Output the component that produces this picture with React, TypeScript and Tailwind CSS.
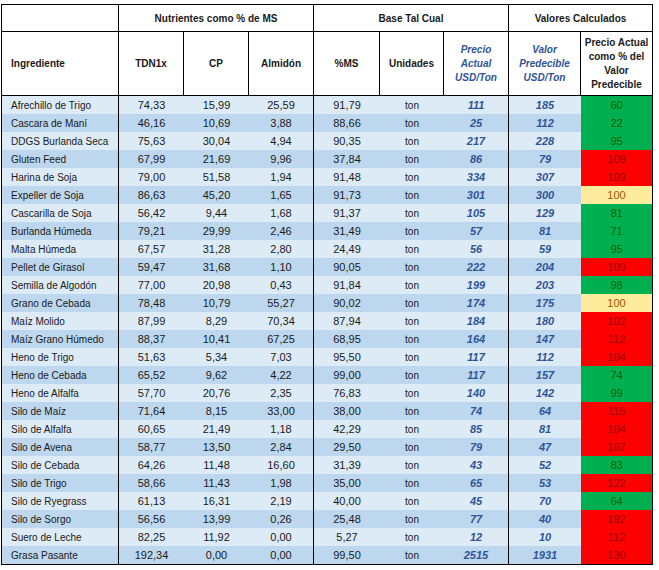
type Tone = 'G' | 'R' | 'Y'

type Row = [string, string, string, string, string, string, string, string, Tone]

const rows: Row[] = [
  ['Afrechillo de Trigo', '74,33', '15,99', '25,59', '91,79', '111', '185', '60', 'G'],
  ['Cascara de Maní', '46,16', '10,69', '3,88', '88,66', '25', '112', '22', 'G'],
  ['DDGS Burlanda Seca', '75,63', '30,04', '4,94', '90,35', '217', '228', '95', 'G'],
  ['Gluten Feed', '67,99', '21,69', '9,96', '37,84', '86', '79', '109', 'R'],
  ['Harina de Soja', '79,00', '51,58', '1,94', '91,48', '334', '307', '109', 'R'],
  ['Expeller de Soja', '86,63', '45,20', '1,65', '91,73', '301', '300', '100', 'Y'],
  ['Cascarilla de Soja', '56,42', '9,44', '1,68', '91,37', '105', '129', '81', 'G'],
  ['Burlanda Húmeda', '79,21', '29,99', '2,46', '31,49', '57', '81', '71', 'G'],
  ['Malta Húmeda', '67,57', '31,28', '2,80', '24,49', '56', '59', '95', 'G'],
  ['Pellet de Girasol', '59,47', '31,68', '1,10', '90,05', '222', '204', '109', 'R'],
  ['Semilla de Algodón', '77,00', '20,98', '0,43', '91,84', '199', '203', '98', 'G'],
  ['Grano de Cebada', '78,48', '10,79', '55,27', '90,02', '174', '175', '100', 'Y'],
  ['Maíz Molido', '87,99', '8,29', '70,34', '87,94', '184', '180', '102', 'R'],
  ['Maíz Grano Húmedo', '88,37', '10,41', '67,25', '68,95', '164', '147', '112', 'R'],
  ['Heno de Trigo', '51,63', '5,34', '7,03', '95,50', '117', '112', '104', 'R'],
  ['Heno de Cebada', '65,52', '9,62', '4,22', '99,00', '117', '157', '74', 'G'],
  ['Heno de Alfalfa', '57,70', '20,76', '2,35', '76,83', '140', '142', '99', 'G'],
  ['Silo de Maíz', '71,64', '8,15', '33,00', '38,00', '74', '64', '115', 'R'],
  ['Silo de Alfalfa', '60,65', '21,49', '1,18', '42,29', '85', '81', '104', 'R'],
  ['Silo de Avena', '58,77', '13,50', '2,84', '29,50', '79', '47', '167', 'R'],
  ['Silo de Cebada', '64,26', '11,48', '16,60', '31,39', '43', '52', '83', 'G'],
  ['Silo de Trigo', '58,66', '11,43', '1,98', '35,00', '65', '53', '122', 'R'],
  ['Silo de Ryegrass', '61,13', '16,31', '2,19', '40,00', '45', '70', '64', 'G'],
  ['Silo de Sorgo', '56,56', '13,99', '0,26', '25,48', '77', '40', '192', 'R'],
  ['Suero de Leche', '82,25', '11,92', '0,00', '5,27', '12', '10', '112', 'R'],
  ['Grasa Pasante', '192,34', '0,00', '0,00', '99,50', '2515', '1931', '130', 'R'],
]

const toneClass: Record<Tone, string> = {
  G: 'bg-[#00b050] text-[#006100]',
  R: 'bg-[#ff0000] text-[#9c0006]',
  Y: 'bg-[#ffeb9c] text-[#9c5700]',
}

const head = 'flex items-center justify-center text-center font-bold border-r border-black'

export default function App() {
  return (
    <div className="bg-white w-[659px] h-[570px] pt-1 pl-px font-['Liberation_Sans',Arial,sans-serif] text-[10px] text-[#1a1a1a]">
      <div className="w-[652px] border border-black grid grid-cols-[117px_65px_65px_65px_66px_64px_65px_72px_71px]">
        {/* header row 1 */}
        <div className="h-[27px] border-r border-b border-black" />
        <div className={`${head} col-span-3 h-[27px] border-b`}>Nutrientes como % de MS</div>
        <div className={`${head} col-span-3 h-[27px] border-b`}>Base Tal Cual</div>
        <div className={`${head} col-span-2 h-[27px] border-b border-r-0`}>Valores Calculados</div>

        {/* header row 2 */}
        <div className="h-[64px] flex items-center pl-[9px] font-bold border-r border-b border-black">Ingrediente</div>
        <div className={`${head} h-[64px] border-b`}>TDN1x</div>
        <div className={`${head} h-[64px] border-b`}>CP</div>
        <div className={`${head} h-[64px] border-b`}>Almidón</div>
        <div className={`${head} h-[64px] border-b`}>%MS</div>
        <div className={`${head} h-[64px] border-b`}>Unidades</div>
        <div className={`${head} h-[64px] border-b italic text-[#2f5597] leading-[14px]`}>
          Precio
          <br />
          Actual
          <br />
          USD/Ton
        </div>
        <div className={`${head} h-[64px] border-b italic text-[#2f5597] leading-[14px]`}>
          Valor
          <br />
          Predecible
          <br />
          USD/Ton
        </div>
        <div className={`${head} h-[64px] border-b border-r-0 leading-[14px]`}>
          Precio Actual
          <br />
          como % del
          <br />
          Valor
          <br />
          Predecible
        </div>

        {/* data */}
        {rows.map((r, i) => {
          const bg = i % 2 === 0 ? 'bg-[#ddebf7]' : 'bg-[#bdd7ee]'
          const num = `${bg} h-[18px] flex items-center justify-center text-[11px]`
          return (
            <div key={r[0]} className="contents">
              <div className={`${bg} h-[18px] flex items-center pl-[9px] border-r border-black`}>{r[0]}</div>
              <div className={num}>{r[1]}</div>
              <div className={num}>{r[2]}</div>
              <div className={`${num} border-r border-black`}>{r[3]}</div>
              <div className={num}>{r[4]}</div>
              <div className={`${bg} h-[18px] flex items-center justify-center`}>ton</div>
              <div className={`${num} border-r border-black font-bold italic text-[#2f5597]`}>{r[5]}</div>
              <div className={`${num} font-bold italic text-[#2f5597]`}>{r[6]}</div>
              <div className={`${toneClass[r[8]]} h-[18px] flex items-center justify-center text-[11px]`}>{r[7]}</div>
            </div>
          )
        })}
      </div>
    </div>
  )
}
